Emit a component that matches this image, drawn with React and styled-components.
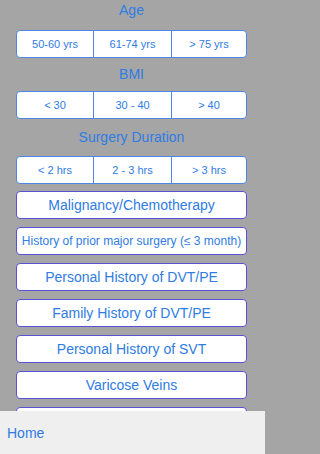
import React from "react";
import styled, { createGlobalStyle } from "styled-components";

const Global = createGlobalStyle`
  html, body { margin: 0; padding: 0; }
  body { font-family: "Liberation Sans", Arial, sans-serif; background: #a5a5a5; }
`;

const Screen = styled.div`
  width: 265px;
  height: 454px;
  display: flex;
  flex-direction: column;
  background: #a5a5a5;
  overflow: hidden;
`;

const Content = styled.div`
  flex: 1;
  min-height: 0;
  overflow: hidden;
  display: flex;
  flex-direction: column;
  padding: 0 18px 0 16px;
`;

const Label = styled.div`
  height: 20px;
  line-height: 20px;
  text-align: center;
  font-size: 14px;
  color: #2f7ce3;
  margin-top: ${(p) => p.$top || 0}px;
  margin-bottom: ${(p) => p.$bottom || 0}px;
`;

const Segmented = styled.div`
  display: grid;
  grid-template-columns: 76px 78px 1fr;
  height: 28px;
  box-sizing: border-box;
  border: 1px solid #4f86e3;
  border-radius: 4px;
  background: #fff;
  overflow: hidden;
  flex-shrink: 0;
`;

const Segment = styled.div`
  display: flex;
  align-items: center;
  justify-content: center;
  font-size: 11px;
  color: #2f7ce3;
  border-left: ${(p) => (p.$first ? "none" : "1px solid #4f86e3")};
`;

const ButtonList = styled.div`
  display: flex;
  flex-direction: column;
  gap: 8px;
  margin-top: 7px;
`;

const OptionButton = styled.div`
  height: 28px;
  box-sizing: border-box;
  flex-shrink: 0;
  border: 1px solid #5a50d6;
  border-radius: 4px;
  background: #fff;
  display: flex;
  align-items: center;
  justify-content: center;
  font-size: ${(p) => (p.$small ? 12 : 14)}px;
  color: #2f7ce3;
  white-space: nowrap;
`;

const Footer = styled.div`
  height: 43px;
  flex-shrink: 0;
  background: #efefef;
  display: flex;
  align-items: center;
  padding-left: 7px;
  font-size: 14px;
  color: #2f7ce3;
`;

const groups = [
  { label: "Age", top: 0, bottom: 10, items: ["50-60 yrs", "61-74 yrs", "> 75 yrs"] },
  { label: "BMI", top: 6, bottom: 7, items: ["< 30", "30 - 40", "> 40"] },
  { label: "Surgery Duration", top: 8, bottom: 9, items: ["< 2 hrs", "2 - 3 hrs", "> 3 hrs"] },
];

const buttons = [
  { t: "Malignancy/Chemotherapy" },
  { t: "History of prior major surgery (\u2264 3 month)", small: true },
  { t: "Personal History of DVT/PE" },
  { t: "Family History of DVT/PE" },
  { t: "Personal History of SVT" },
  { t: "Varicose Veins" },
  { t: "" },
];

export default function App() {
  return (
    <Screen>
      <Global />
      <Content>
        {groups.map((g) => (
          <React.Fragment key={g.label}>
            <Label $top={g.top} $bottom={g.bottom}>{g.label}</Label>
            <Segmented>
              {g.items.map((it, i) => (
                <Segment key={it} $first={i === 0}>{it}</Segment>
              ))}
            </Segmented>
          </React.Fragment>
        ))}
        <ButtonList>
          {buttons.map((b, i) => (
            <OptionButton key={i} $small={b.small}>{b.t}</OptionButton>
          ))}
        </ButtonList>
      </Content>
      <Footer>Home</Footer>
    </Screen>
  );
}
